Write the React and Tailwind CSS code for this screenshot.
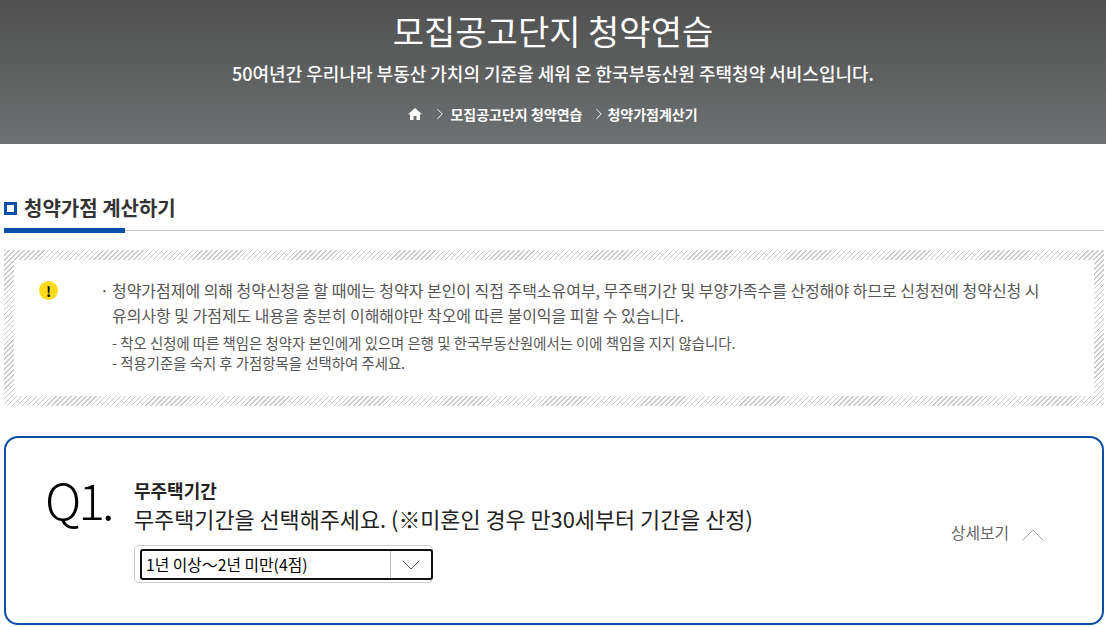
import { ChevronDown, ChevronRight, ChevronUp } from "lucide-react";

const font = { fontFamily: '"Noto Sans CJK KR", "Noto Sans", sans-serif' };

function Home() {
  return (
    <svg width="14" height="12" viewBox="0 0 14 12" className="mr-[9px]">
      <path d="M7 0 L14 6.2 L12 6.2 L12 12 L8.5 12 L8.5 8 L5.5 8 L5.5 12 L2 12 L2 6.2 L0 6.2 Z" fill="#fff" />
    </svg>
  );
}

export default function App() {
  return (
    <div className="h-[627px] overflow-hidden bg-white" style={font}>
      {/* 상단 비주얼 */}
      <div className="flex h-[144px] flex-col items-center bg-gradient-to-b from-[#505050] to-[#6d7171] text-white">
        <h1 className="mt-[8px] text-[34px] leading-[46px] font-normal">모집공고단지 청약연습</h1>
        <p className="mt-[5px] text-[18px] leading-[28px] font-medium">
          50여년간 우리나라 부동산 가치의 기준을 세워 온 한국부동산원 주택청약 서비스입니다.
        </p>
        <div className="mt-[17px] flex h-5 items-center text-[14px] font-bold">
          <Home />
          <ChevronRight size={18} strokeWidth={1.3} className="mr-[1px]" />
          <span>모집공고단지 청약연습</span>
          <ChevronRight size={18} strokeWidth={1.3} className="mr-[-1px] ml-[8px]" />
          <span>청약가점계산기</span>
        </div>
      </div>

      <div className="pr-[2px] pl-1">
        {/* 타이틀 */}
        <div className="relative mt-[47px] flex h-[40px] items-start border-b border-[#c8c8c8]">
          <span className="mt-[11px] mr-[7px] h-[13px] w-[13px] border-[3px] border-[#0b4ea8]" />
          <h2 className="text-[20px] leading-[34px] font-bold text-[#333]">청약가점 계산하기</h2>
          <span className="absolute -bottom-[3px] left-0 h-[5px] w-[121px] bg-[#0b4ea8]" />
        </div>

        {/* 안내 */}
        <div className="mt-[19px] h-[156px] bg-[repeating-linear-gradient(135deg,#c9c9c9_0,#c9c9c9_1px,#fff_1px,#fff_3.5px)] p-[10px]">
          <div className="flex h-full bg-white pt-[21px] pl-[25px]">
            <span className="flex h-[19px] w-[19px] shrink-0 items-center justify-center rounded-full bg-[#ffd91c] text-[14px] leading-none font-bold text-black">
              !
            </span>
            <div className="-mt-[3px] ml-[42px] text-[#555]">
              <div className="flex text-[15.96px] leading-[25px]">
                <span className="w-[12px] shrink-0">·</span>
                <p className="w-[945px] break-keep">
                  청약가점제에 의해 청약신청을 할 때에는 청약자 본인이 직접 주택소유여부, 무주택기간 및 부양가족수를 산정해야 하므로 신청전에 청약신청 시 유의사항 및 가점제도 내용을 충분히 이해해야만 착오에 따른 불이익을 피할 수 있습니다.
                </p>
              </div>
              <div className="mt-[5px] pl-[12px] text-[14.4px] leading-[20px]">
                <p>- 착오 신청에 따른 책임은 청약자 본인에게 있으며 은행 및 한국부동산원에서는 이에 책임을 지지 않습니다.</p>
                <p>- 적용기준을 숙지 후 가점항목을 선택하여 주세요.</p>
              </div>
            </div>
          </div>
        </div>

        {/* Q1 */}
        <div className="mt-[30px] flex h-[189px] rounded-[14px] border-2 border-[#0b4ea8] pt-[33px] pl-[39px]">
          <div className="-mt-[6px] w-[89px] shrink-0 text-[50px] leading-[66px] font-light tracking-[-3px] text-black">Q1.</div>
          <div className="w-[817px] shrink-0">
            <p className="mt-[7px] text-[18px] leading-[24px] font-bold text-[#222]">무주택기간</p>
            <p className="mt-[1px] text-[21.85px] leading-[32px] text-[#222]">무주택기간을 선택해주세요. (※미혼인 경우 만30세부터 기간을 산정)</p>
            <div className="mt-[10px] h-[38px] w-[299px] rounded-[5px] border border-[#ccc] p-[3px_0_3px_5px]">
              <div className="flex h-[31px] w-[293px] items-center rounded-[3px] border-2 border-[#111] text-[15.8px] text-black">
                <span className="flex-1 pl-[4px]">1년 이상～2년 미만(4점)</span>
                <span className="flex h-full w-[41px] items-center justify-center border-l border-[#bbb]">
                  <ChevronDown size={32} strokeWidth={0.75} className="text-[#555]" />
                </span>
              </div>
            </div>
          </div>
          <div className="mt-[50px] flex h-6 items-center text-[15.8px] whitespace-nowrap text-[#666]">
            상세보기
            <ChevronUp size={40} strokeWidth={0.6} className="mt-[4px] ml-[4px] shrink-0 text-[#aaa]" />
          </div>
        </div>
      </div>
    </div>
  );
}
